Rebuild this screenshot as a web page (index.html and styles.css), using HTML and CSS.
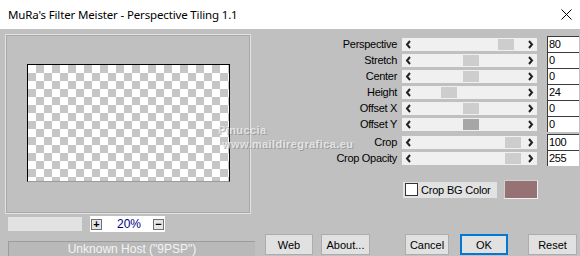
FILE: index.html
```html
<!DOCTYPE html>
<html>

<head lang="en">
    <meta charset="utf-8">
    <title>MuRa's Filter Meister - Perspective Tiling 1.1</title>
    <link rel="stylesheet" href="styles.css">
</head>

<body>
    <div class="window">
        <div class="titlebar">
            <span class="title">MuRa's Filter Meister - Perspective Tiling 1.1</span>
            <svg class="close" width="11" height="11" viewBox="0 0 11 11">
                <path d="M0.5 0.5 L10.5 10.5 M10.5 0.5 L0.5 10.5" stroke="#000" stroke-width="1" fill="none" />
            </svg>
        </div>

        <div class="main">
            <div class="left">
                <div class="preview">
                    <div class="checker"></div>
                </div>
                <div class="zoombar">
                    <div class="zoomtrack"></div>
                    <div class="zoombox">
                        <span class="zbtn">+</span>
                        <span class="zval">20%</span>
                        <span class="zbtn">&minus;</span>
                    </div>
                </div>
            </div>

            <div class="right">
                <div class="params">
                    <div class="row">
                        <span class="label">Perspective</span>
                        <div class="track">
                            <svg class="arr" width="13" height="13" viewBox="0 0 13 13"><path d="M8 3 L5 6.5 L8 10" /></svg>
                            <div class="inner"><span class="thumb" style="margin-left: 83px"></span></div>
                            <svg class="arr" width="13" height="13" viewBox="0 0 13 13"><path d="M5 3 L8 6.5 L5 10" /></svg>
                        </div>
                        <span class="val">80</span>
                    </div>
                    <div class="row">
                        <span class="label">Stretch</span>
                        <div class="track">
                            <svg class="arr" width="13" height="13" viewBox="0 0 13 13"><path d="M8 3 L5 6.5 L8 10" /></svg>
                            <div class="inner"><span class="thumb" style="margin-left: 48px"></span></div>
                            <svg class="arr" width="13" height="13" viewBox="0 0 13 13"><path d="M5 3 L8 6.5 L5 10" /></svg>
                        </div>
                        <span class="val">0</span>
                    </div>
                    <div class="row">
                        <span class="label">Center</span>
                        <div class="track">
                            <svg class="arr" width="13" height="13" viewBox="0 0 13 13"><path d="M8 3 L5 6.5 L8 10" /></svg>
                            <div class="inner"><span class="thumb" style="margin-left: 48px"></span></div>
                            <svg class="arr" width="13" height="13" viewBox="0 0 13 13"><path d="M5 3 L8 6.5 L5 10" /></svg>
                        </div>
                        <span class="val">0</span>
                    </div>
                    <div class="row">
                        <span class="label">Height</span>
                        <div class="track">
                            <svg class="arr" width="13" height="13" viewBox="0 0 13 13"><path d="M8 3 L5 6.5 L8 10" /></svg>
                            <div class="inner"><span class="thumb" style="margin-left: 26px"></span></div>
                            <svg class="arr" width="13" height="13" viewBox="0 0 13 13"><path d="M5 3 L8 6.5 L5 10" /></svg>
                        </div>
                        <span class="val">24</span>
                    </div>
                    <div class="row">
                        <span class="label">Offset X</span>
                        <div class="track">
                            <svg class="arr" width="13" height="13" viewBox="0 0 13 13"><path d="M8 3 L5 6.5 L8 10" /></svg>
                            <div class="inner"><span class="thumb" style="margin-left: 48px"></span></div>
                            <svg class="arr" width="13" height="13" viewBox="0 0 13 13"><path d="M5 3 L8 6.5 L5 10" /></svg>
                        </div>
                        <span class="val">0</span>
                    </div>
                    <div class="row">
                        <span class="label">Offset Y</span>
                        <div class="track">
                            <svg class="arr" width="13" height="13" viewBox="0 0 13 13"><path d="M8 3 L5 6.5 L8 10" /></svg>
                            <div class="inner"><span class="thumb focus" style="margin-left: 48px"></span></div>
                            <svg class="arr" width="13" height="13" viewBox="0 0 13 13"><path d="M5 3 L8 6.5 L5 10" /></svg>
                        </div>
                        <span class="val">0</span>
                    </div>
                    <div class="row gap">
                        <span class="label">Crop</span>
                        <div class="track">
                            <svg class="arr" width="13" height="13" viewBox="0 0 13 13"><path d="M8 3 L5 6.5 L8 10" /></svg>
                            <div class="inner"><span class="thumb" style="margin-left: 90px"></span></div>
                            <svg class="arr" width="13" height="13" viewBox="0 0 13 13"><path d="M5 3 L8 6.5 L5 10" /></svg>
                        </div>
                        <span class="val">100</span>
                    </div>
                    <div class="row">
                        <span class="label">Crop Opacity</span>
                        <div class="track">
                            <svg class="arr" width="13" height="13" viewBox="0 0 13 13"><path d="M8 3 L5 6.5 L8 10" /></svg>
                            <div class="inner"><span class="thumb" style="margin-left: 90px"></span></div>
                            <svg class="arr" width="13" height="13" viewBox="0 0 13 13"><path d="M5 3 L8 6.5 L5 10" /></svg>
                        </div>
                        <span class="val">255</span>
                    </div>
                </div>

                <div class="bgrow">
                    <label class="cbox"><span class="check"></span>Crop BG Color</label>
                    <div class="swatch"></div>
                </div>
            </div>
        </div>

        <div class="bottom">
            <div class="status">Unknown Host ("9PSP")</div>
            <button class="btn web">Web</button>
            <button class="btn about">About...</button>
            <button class="btn cancel">Cancel</button>
            <button class="btn ok">OK</button>
            <button class="btn reset">Reset</button>
        </div>

        <div class="mark">
            <span class="mark1">Pinuccia</span>
            <span class="mark2">www.maildiregrafica.eu</span>
        </div>
    </div>
</body>

</html>
```

FILE: styles.css
```css
body {
    margin: 0;
    background-color: #c0c0c0;
    font-family: "Liberation Sans", Arial, sans-serif;
    font-size: 11px;
    color: #000;
}

.window {
    position: relative;
    width: 580px;
    height: 256px;
    overflow: hidden;
    background-color: #c0c0c0;
}

/* title bar */

.titlebar {
    height: 29px;
    background-color: #fff;
    display: flex;
    align-items: center;
    justify-content: space-between;
    padding: 0 8px 0 8px;
    box-sizing: border-box;
}

.title {
    font-family: "Noto Sans", "Open Sans", sans-serif;
    font-size: 11.5px;
    letter-spacing: -0.15px;
    color: #000;
}

/* main area */

.main {
    display: flex;
    align-items: flex-start;
}

.left {
    margin-left: 5px;
    margin-top: 5px;
    width: 246px;
}

.preview {
    height: 180px;
    box-sizing: border-box;
    border: 1px solid #e2e2e2;
    box-shadow: inset 1px 1px 0 #a8a8a8, inset -1px -1px 0 #a8a8a8;
    display: flex;
    align-items: center;
    justify-content: center;
}

.checker {
    width: 203px;
    height: 118px;
    box-sizing: border-box;
    border: 1px solid #000;
    border-bottom-color: #9a9a9a;
    background: repeating-conic-gradient(#c6c6c6 0 25%, #fff 0 50%) 0 0 / 16px 16px;
    margin-left: 1px;
    margin-top: -2px;
}

.zoombar {
    display: flex;
    align-items: center;
    margin-top: 2px;
    height: 16px;
}

.zoomtrack {
    width: 74px;
    height: 14px;
    margin-left: 3px;
    background-color: #e2e2e2;
}

.zoombox {
    width: 75px;
    height: 16px;
    margin-left: 8px;
    background-color: #fff;
    display: flex;
    align-items: center;
}

.zbtn {
    width: 9px;
    height: 9px;
    border: 1px solid #707070;
    background-color: #e6e6e6;
    font-size: 11px;
    line-height: 9px;
    text-align: center;
    font-weight: bold;
    margin-left: 1px;
}

.zval {
    color: #000080;
    font-size: 12px;
    margin-left: 15px;
    width: 35px;
}

/* parameter sliders */

.right {
    flex: 1;
    padding-top: 7px;
}

.row {
    display: flex;
    align-items: center;
    height: 16px;
    justify-content: flex-end;
}

.row.gap {
    margin-top: 2px;
}

.label {
    padding-right: 5px;
    letter-spacing: -0.3px;
    white-space: nowrap;
}

.track {
    width: 135px;
    height: 13px;
    background-color: #f0f0f0;
    display: flex;
    align-items: center;
}

.arr {
    flex: none;
}

.arr path {
    fill: none;
    stroke: #222;
    stroke-width: 2;
}

.inner {
    flex: 1;
    height: 13px;
    display: flex;
    align-items: center;
}

.thumb {
    width: 16px;
    height: 11px;
    background-color: #cdcdcd;
}

.thumb.focus {
    background-color: #a6a6a6;
}

.val {
    width: 30px;
    height: 15px;
    margin-left: 10px;
    margin-right: 1px;
    background-color: #fff;
    border-top: 1px solid #3a3a3a;
    border-left: 1px solid #3a3a3a;
    padding-left: 1px;
    line-height: 15px;
    letter-spacing: -0.4px;
}

.bgrow {
    display: flex;
    align-items: center;
    justify-content: flex-end;
    padding-right: 42px;
    margin-top: 14px;
}

.cbox {
    width: 94px;
    height: 16px;
    background-color: #e2e2e2;
    display: flex;
    align-items: center;
    letter-spacing: -0.2px;
}

.check {
    width: 11px;
    height: 11px;
    border: 1px solid #333;
    background-color: #fff;
    margin-left: 2px;
    margin-right: 3px;
}

.swatch {
    width: 32px;
    height: 17px;
    margin-left: 7px;
    background-color: #977274;
    border: 1px solid #f0f0f0;
    border-top-color: #d0d0d0;
    border-left-color: #d0d0d0;
}

/* bottom bar */

.bottom {
    display: flex;
    align-items: flex-start;
    padding-top: 2px;
}

.status {
    width: 247px;
    height: 16px;
    margin-left: 8px;
    margin-top: 7px;
    box-sizing: border-box;
    background-color: #b9b9b9;
    border-top: 1px solid #9c9c9c;
    border-left: 1px solid #9c9c9c;
    color: #f4f4f4;
    text-align: center;
    font-size: 12px;
    line-height: 15px;
}

.btn {
    height: 21px;
    padding: 0;
    background-color: #e1e1e1;
    border: 1px solid #adadad;
    font-family: "Liberation Sans", Arial, sans-serif;
    font-size: 11px;
    color: #000;
}

.web {
    width: 48px;
    margin-left: 10px;
}

.about {
    width: 49px;
    margin-left: 8px;
}

.cancel {
    width: 44px;
    margin-left: 35px;
}

.ok {
    width: 48px;
    margin-left: 11px;
    border-color: #0078d7;
    box-shadow: inset 0 0 0 1px #0078d7;
}

.reset {
    width: 49px;
    margin-left: 20px;
}

/* watermark over the picture */

.mark {
    position: absolute;
    left: 218px;
    top: 124px;
    font-weight: bold;
    font-size: 11px;
    letter-spacing: 0.4px;
    color: rgba(240, 240, 240, 0.8);
    text-shadow: 1px 1px 0 rgba(130, 130, 130, 0.6);
    pointer-events: none;
}

.mark1 {
    display: block;
}

.mark2 {
    display: block;
    margin-top: 2px;
    margin-left: 4px;
}
```
